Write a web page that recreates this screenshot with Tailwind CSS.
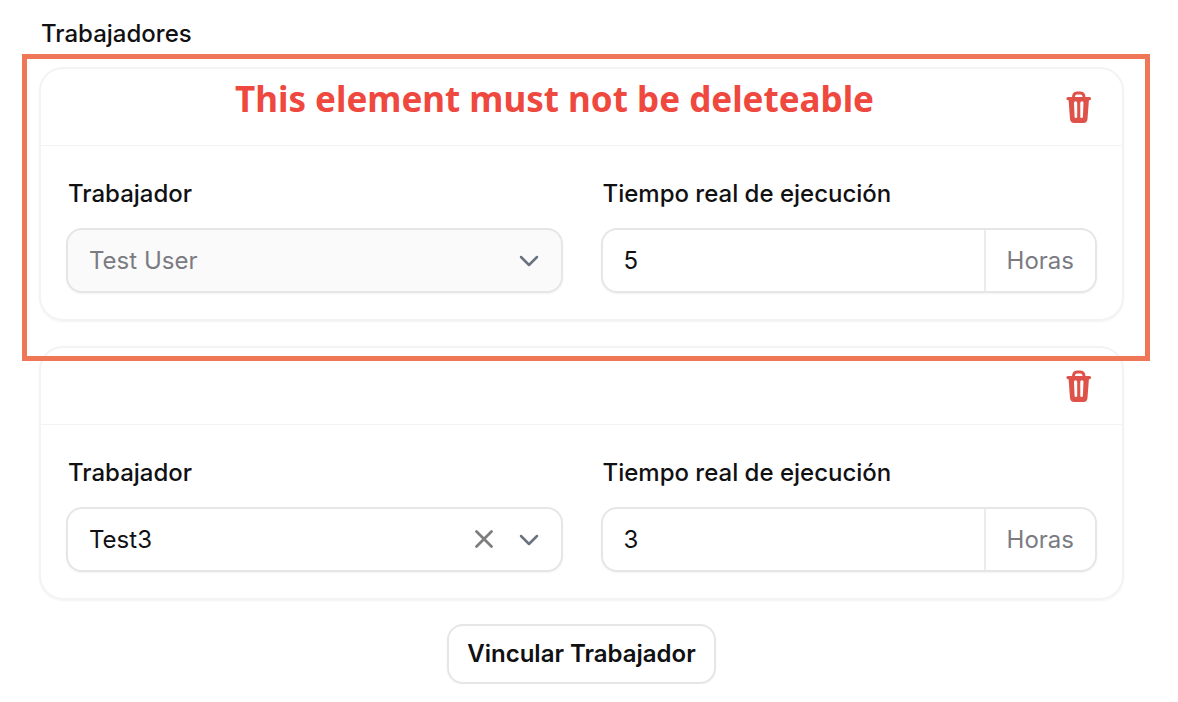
<!DOCTYPE html>
<html lang="es">
<head>
  <meta charset="UTF-8">
  <title>Trabajadores</title>
  <meta name="viewport" content="width=device-width, initial-scale=1" />
  <script src="https://cdn.jsdelivr.net/npm/@tailwindcss/browser@4"></script>
</head>
<body class="bg-white font-['Inter',sans-serif] text-2xl leading-8 text-[#111113]">
  <main class="pl-[39px] pr-[54px] pt-[18px]">
    <h1 class="px-[2px] mb-[17px] font-medium">Trabajadores</h1>

    <ul class="flex flex-col gap-[25px]">
      <li class="relative rounded-[24px] border-2 border-[#f3f3f3] shadow-xs">
        <div class="flex h-[76px] items-center justify-end px-[26px]">
          <button type="button" aria-label="Eliminar" class="text-[#df5249]">
            <svg class="h-[34px] w-[34px]" viewBox="0 0 34 34" fill="none">
              <path d="M11.300 8.500C11.300 4.500 12.500 2.900 15 2.900h3.500C21 2.900 22.200 4.500 22.200 8.500" stroke="currentColor" stroke-width="3" />
              <path fill="currentColor" fill-rule="evenodd" d="M6 7h21.500a1.500 1.500 0 0 1 0 3.200h-.6l-1.400 18.800Q25 33 21.500 33h-9.500Q8.500 33 8 29L6.600 10.200H6a1.500 1.500 0 0 1 0-3.200ZM12 12.800l.6 14a1.300 1.300 0 0 0 2.600 0v-14a1.600 1.600 0 0 0-3.200 0ZM18.300 12.800v14a1.300 1.300 0 0 0 2.600 0l.6-14a1.600 1.600 0 0 0-3.200 0Z" />
            </svg>
          </button>
        </div>
        <div class="grid grid-cols-2 gap-x-[38px] border-t border-[#f3f3f3] px-[25px] pb-[26px] pt-8">
          <div>
            <label for="worker-1" class="mb-[18px] block px-[2px] font-medium">Trabajador</label>
            <div class="relative">
              <select id="worker-1" disabled class="block h-[65px] w-full appearance-none rounded-[16px] border-2 border-[#e6e6e7] bg-[#fafafa] px-[21px] text-[#7b7b82] opacity-100 shadow-xs">
                <option>Test User</option>
              </select>
              <svg class="pointer-events-none absolute right-6 top-[27px] h-3 w-5" viewBox="0 0 20 12" fill="none" stroke="#6b7280" stroke-width="2.500" stroke-linecap="round" stroke-linejoin="round"><path d="M2 2l8 8L18 2" /></svg>
            </div>
          </div>
          <div>
            <label for="hours-1" class="mb-[18px] block px-[2px] font-medium">Tiempo real de ejecución</label>
            <div class="flex h-[65px] overflow-hidden rounded-[16px] border-2 border-[#e6e6e7] shadow-xs">
              <input id="hours-1" type="text" inputmode="numeric" value="5" class="min-w-0 flex-1 bg-transparent px-[21px]" />
              <span class="flex items-center border-l-2 border-[#ebebeb] px-[21px] text-[#7b7b82]">Horas</span>
            </div>
          </div>
        </div>

        <!-- review note laid over the card -->
        <div class="pointer-events-none absolute -bottom-[42px] -left-[19px] -right-[28px] -top-[15px] border-[5px] border-[#ef7757]">
          <p class="mx-[208px] mt-4 whitespace-nowrap font-['Noto_Sans',sans-serif] text-[35px] leading-[48px] font-bold text-[#ee483f]">This element must not be deleteable</p>
        </div>
      </li>

      <li class="rounded-[24px] border-2 border-[#f3f3f3] shadow-xs">
        <div class="flex h-[76px] items-center justify-end px-[26px]">
          <button type="button" aria-label="Eliminar" class="text-[#df5249]">
            <svg class="h-[34px] w-[34px]" viewBox="0 0 34 34" fill="none">
              <path d="M11.300 8.500C11.300 4.500 12.500 2.900 15 2.900h3.500C21 2.900 22.200 4.500 22.200 8.500" stroke="currentColor" stroke-width="3" />
              <path fill="currentColor" fill-rule="evenodd" d="M6 7h21.500a1.500 1.500 0 0 1 0 3.200h-.6l-1.400 18.800Q25 33 21.500 33h-9.500Q8.500 33 8 29L6.600 10.200H6a1.500 1.500 0 0 1 0-3.200ZM12 12.800l.6 14a1.300 1.300 0 0 0 2.600 0v-14a1.600 1.600 0 0 0-3.200 0ZM18.300 12.800v14a1.300 1.300 0 0 0 2.600 0l.6-14a1.600 1.600 0 0 0-3.200 0Z" />
            </svg>
          </button>
        </div>
        <div class="grid grid-cols-2 gap-x-[38px] border-t border-[#f3f3f3] px-[25px] pb-[26px] pt-8">
          <div>
            <label for="worker-2" class="mb-[18px] block px-[2px] font-medium">Trabajador</label>
            <div class="relative">
              <select id="worker-2" class="block h-[65px] w-full appearance-none rounded-[16px] border-2 border-[#e6e6e7] bg-white px-[21px] shadow-xs">
                <option>Test3</option>
              </select>
              <button type="button" aria-label="Quitar" class="absolute right-[69px] top-[22px]">
                <svg class="h-5 w-5" viewBox="0 0 20 20" fill="none" stroke="#7d7d7d" stroke-width="2.800" stroke-linecap="round"><path d="M2.500 2.500l15 15M17.500 2.500l-15 15" /></svg>
              </button>
              <svg class="pointer-events-none absolute right-6 top-[27px] h-3 w-5" viewBox="0 0 20 12" fill="none" stroke="#6b7280" stroke-width="2.500" stroke-linecap="round" stroke-linejoin="round"><path d="M2 2l8 8L18 2" /></svg>
            </div>
          </div>
          <div>
            <label for="hours-2" class="mb-[18px] block px-[2px] font-medium">Tiempo real de ejecución</label>
            <div class="flex h-[65px] overflow-hidden rounded-[16px] border-2 border-[#e6e6e7] shadow-xs">
              <input id="hours-2" type="text" inputmode="numeric" value="3" class="min-w-0 flex-1 bg-transparent px-[21px]" />
              <span class="flex items-center border-l-2 border-[#ebebeb] px-[21px] text-[#7b7b82]">Horas</span>
            </div>
          </div>
        </div>
      </li>
    </ul>

    <div class="mt-6 flex justify-center">
      <button type="button" class="h-[60px] rounded-[16px] border-2 border-[#e6e6e7] px-[18px] font-semibold shadow-xs">Vincular Trabajador</button>
    </div>
  </main>
</body>
</html>
